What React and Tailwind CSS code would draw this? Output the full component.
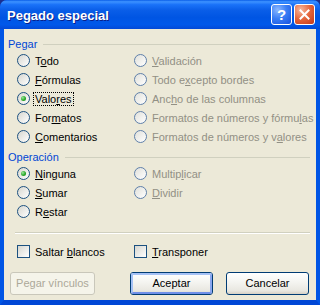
import React from "react";

const U = ({ children }) => <span className="underline underline-offset-[1px] decoration-1">{children}</span>;

function Radio({ checked, disabled }) {
  return (
    <span
      className={
        "relative flex h-[13px] w-[13px] shrink-0 items-center justify-center rounded-full border " +
        (disabled
          ? "border-[#5f80aa] bg-[linear-gradient(135deg,#e0e0da,#ffffff)]"
          : "border-[#1c5180] bg-[linear-gradient(135deg,#d6d6cf,#ffffff)]")
      }
    >
      {checked && (
        <span className="h-[5px] w-[5px] rounded-full bg-[radial-gradient(circle_at_35%_35%,#9be89b,#2aa82a_55%,#1a8a1a)]" />
      )}
    </span>
  );
}

function RadioItem({ label, checked, disabled, focus }) {
  return (
    <div className="flex h-[19px] items-center">
      <Radio checked={checked} disabled={disabled} />
      <span
        className={
          "ml-[3px] border px-[1px] leading-[12px] " +
          (focus ? "border-dotted border-black " : "border-transparent ") +
          (disabled ? "text-[#929085]" : "text-black")
        }
      >
        {label}
      </span>
    </div>
  );
}

function Check({ label }) {
  return (
    <div className="flex h-[19px] items-center">
      <span className="h-[13px] w-[13px] shrink-0 border border-[#1c5180] bg-[linear-gradient(135deg,#d6d6cf,#ffffff)]" />
      <span className="ml-[3px] border border-transparent px-[1px] leading-[12px] text-black">{label}</span>
    </div>
  );
}

function Group({ title, className }) {
  return (
    <div className={"flex h-[14px] items-center pl-[4px] pr-[6px] " + className}>
      <span className="text-[#0046d5] leading-[14px]">{title}</span>
      <span className="ml-[6px] h-px flex-1 bg-[#d0d0bf]" />
    </div>
  );
}

function Btn({ children, def, disabled, className }) {
  if (disabled)
    return (
      <div
        className={
          "flex h-[23px] items-center justify-center rounded-[3px] border border-[#c9c7ba] bg-[#f5f4ea] text-[#aca899] " +
          className
        }
      >
        {children}
      </div>
    );
  return (
    <div
      className={
        "flex h-[23px] items-center justify-center rounded-[3px] border border-[#003c74] bg-[linear-gradient(to_bottom,#ffffff_0%,#f4f4f0_45%,#e8e7e0_85%,#d6d0c5_100%)] text-black " +
        className
      }
    >
      {def ? (
        <div className="flex h-full w-full items-center justify-center rounded-[2px] border-[2px] border-[#a5c1f5] border-b-[#6f8fe8] border-r-[#8aa7ee]">
          {children}
        </div>
      ) : (
        children
      )}
    </div>
  );
}

export default function App() {
  return (
    <div
      className="h-[305px] w-[320px] overflow-hidden bg-[#1b2f8f] text-[11px] leading-none"
      style={{ fontFamily: '"Liberation Sans", Arial, sans-serif' }}
    >
      <div className="flex h-full w-full flex-col overflow-hidden rounded-t-[7px] bg-[#0053e1]">
        {/* Title bar */}
        <div className="flex h-[29px] shrink-0 items-center bg-[linear-gradient(to_bottom,#0a5ee8_0%,#3d92ff_6%,#1a72f8_16%,#0a5ee8_35%,#0055e3_60%,#0058ea_85%,#0349d6_100%)] pl-[7px] pr-[5px]">
          <span className="mt-[1px] text-[13px] font-bold text-white [text-shadow:1px_1px_0_#0a1f8a]">
            Pegado especial
          </span>
          <div className="ml-auto flex gap-[2px]">
            <div className="flex h-[21px] w-[21px] items-center justify-center rounded-[3px] border border-white bg-[radial-gradient(circle_at_30%_25%,#8cb8ff,#3b7ff5_45%,#1550e0_100%)]">
              <span className="text-[15px] font-bold text-white">?</span>
            </div>
            <div className="flex h-[21px] w-[21px] items-center justify-center rounded-[3px] border border-white bg-[radial-gradient(circle_at_30%_25%,#f7b79c,#e4643a_50%,#c2381a_100%)]">
              <svg width="11" height="11" viewBox="0 0 11 11">
                <path d="M1.5 1.5 L9.5 9.5 M9.5 1.5 L1.5 9.5" stroke="white" strokeWidth="2" strokeLinecap="square" />
              </svg>
            </div>
          </div>
        </div>
        {/* Body row */}
        <div className="flex flex-1 border-x-[4px] border-b-[5px] border-x-[#0055e5] border-b-[#0047d6]">
          <div className="flex flex-1 flex-col bg-[#ece9d8]">
            <Group title="Pegar" className="mt-[8px]" />
            <div className="flex pl-[13px]">
              <div className="w-[117px]">
                <RadioItem label={<>T<U>o</U>do</>} />
                <RadioItem label={<><U>F</U>órmulas</>} />
                <RadioItem label={<>Valo<U>r</U>es</>} checked focus />
                <RadioItem label={<>For<U>m</U>atos</>} />
                <RadioItem label={<><U>C</U>omentarios</>} />
              </div>
              <div>
                <RadioItem disabled label={<><U>V</U>alidación</>} />
                <RadioItem disabled label={<>Todo e<U>x</U>cepto bordes</>} />
                <RadioItem disabled label={<>Anc<U>h</U>o de las columnas</>} />
                <RadioItem disabled label={<>Formatos de números y fórmu<U>l</U>as</>} />
                <RadioItem disabled label={<>Formatos de números y v<U>a</U>lores</>} />
              </div>
            </div>
            <Group title="Operación" className="mt-[4px]" />
            <div className="flex pl-[13px]">
              <div className="w-[117px]">
                <RadioItem label={<><U>N</U>inguna</>} checked />
                <RadioItem label={<><U>S</U>umar</>} />
                <RadioItem label={<>R<U>e</U>star</>} />
              </div>
              <div>
                <RadioItem disabled label={<>Multip<U>l</U>icar</>} />
                <RadioItem disabled label={<><U>D</U>ividir</>} />
              </div>
            </div>
            <div className="ml-[11px] mr-[6px] mt-[11px] h-[2px] border-t border-b border-t-[#d0d0bf] border-b-white" />
            <div className="mt-[8px] flex pl-[13px]">
              <div className="w-[117px]">
                <Check label={<>Saltar <U>b</U>lancos</>} />
              </div>
              <Check label={<><U>T</U>ransponer</>} />
            </div>
            <div className="mt-[11px] flex pl-[6px]">
              <Btn disabled className="w-[85px]">Pegar vínculos</Btn>
              <Btn def className="ml-[35px] w-[83px]">Aceptar</Btn>
              <Btn className="ml-[13px] w-[83px]">Cancelar</Btn>
            </div>
          </div>
        </div>
      </div>
    </div>
  );
}
